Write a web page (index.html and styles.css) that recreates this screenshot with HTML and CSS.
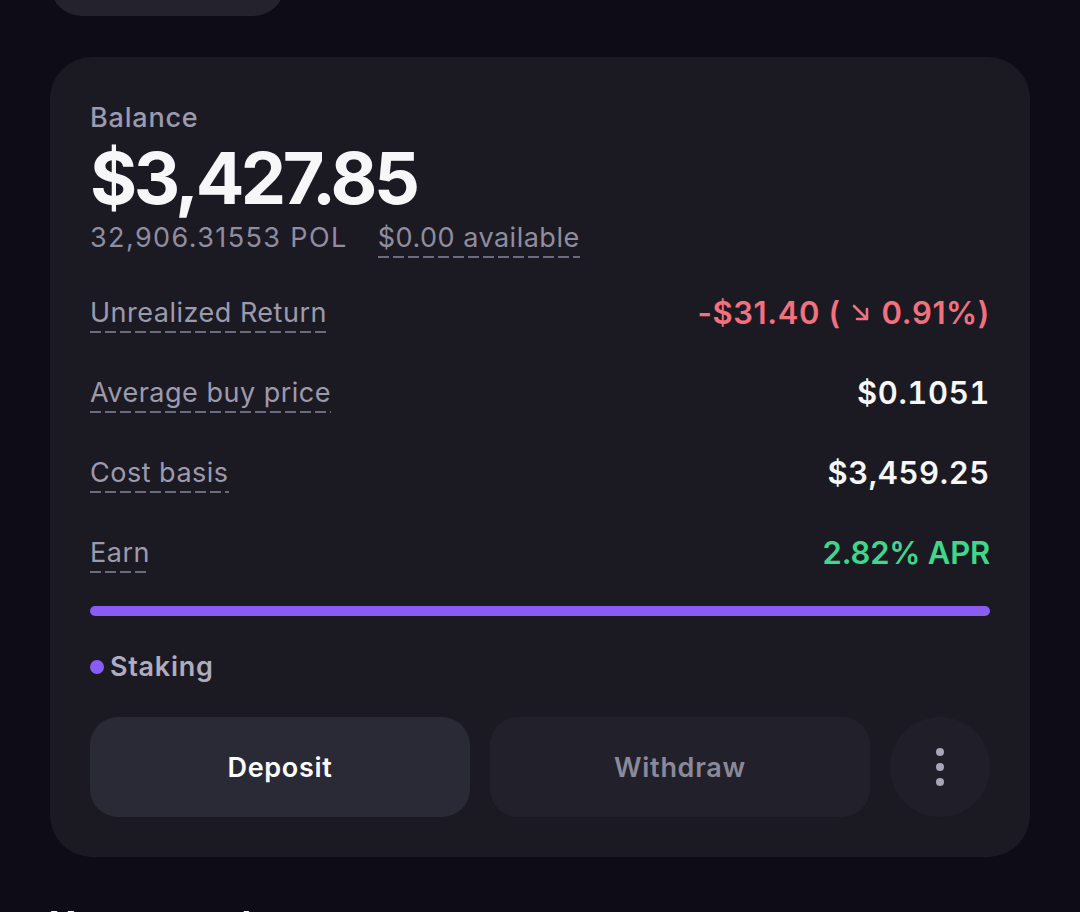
FILE: index.html
```html
<!DOCTYPE html>
<html>
<head>
<meta charset="utf-8">
<link rel="stylesheet" href="styles.css">
</head>
<body>
<div class="page">
  <div class="top-pill"></div>
  <section class="card">
    <div class="label-balance">Balance</div>
    <div class="amount">$3,427.85</div>
    <div class="subline">
      <span class="pol">32,906.31553 POL</span>
      <span class="dash avail">$0.00 available</span>
    </div>
    <div class="rows">
      <div class="row">
        <span class="dash">Unrealized Return</span>
        <span class="val neg">-$31.40 (<svg class="arrow" viewBox="0 0 24 24" width="24" height="24"><path d="M5 5 L18 18 M18 8 V18 H8" fill="none" stroke="currentColor" stroke-width="2.6" stroke-linecap="round" stroke-linejoin="round"/></svg>0.91%)</span>
      </div>
      <div class="row">
        <span class="dash">Average buy price</span>
        <span class="val">$0.1051</span>
      </div>
      <div class="row">
        <span class="dash">Cost basis</span>
        <span class="val">$3,459.25</span>
      </div>
      <div class="row">
        <span class="dash">Earn</span>
        <span class="val pos">2.82% APR</span>
      </div>
    </div>
    <div class="bar"></div>
    <div class="legend"><span class="dot"></span>Staking</div>
    <div class="actions">
      <button class="btn btn-primary">Deposit</button>
      <button class="btn btn-secondary">Withdraw</button>
      <button class="btn-more" aria-label="More"><span></span><span></span><span></span></button>
    </div>
  </section>
  <h2 class="next-title">Your rewards</h2>
</div>
</body>
</html>
```
FILE: styles.css
```css
* { box-sizing: border-box; }
html, body {
  margin: 0;
  padding: 0;
  background: #0e0c16;
}
body {
  width: 1080px;
  height: 912px;
  overflow: hidden;
  font-family: Inter, "Noto Sans", sans-serif;
  color: #ffffff;
}
.page {
  padding: 0 50px;
}
.top-pill {
  width: 235px;
  height: 80px;
  margin-top: -64px;
  background: #24232d;
  border-radius: 32px;
}
.card {
  margin-top: 41px;
  background: #1b1a23;
  border-radius: 42px;
  padding: 45px 40px 40px;
  display: flex;
  flex-direction: column;
}
.label-balance {
  font-size: 27px;
  line-height: 32px;
  font-weight: 500;
  letter-spacing: 0.8px;
  color: #9c9aad;
}
.amount {
  margin-top: 4px;
  font-size: 72px;
  line-height: 80px;
  font-weight: 700;
  letter-spacing: -3.5px;
  color: #f7f7fa;
}
.subline {
  margin-top: 4px;
  font-size: 27px;
  line-height: 32px;
  color: #8f8d9f;
  display: flex;
  gap: 30px;
}
.pol { letter-spacing: 1.4px; }
.avail { letter-spacing: 0.5px; }
.dash {
  display: inline-block;
  padding-bottom: 6px;
  margin-bottom: -6px;
  background-image: linear-gradient(to right, #6c6a7d 11px, transparent 11px);
  background-size: 15px 2px;
  background-repeat: repeat-x;
  background-position: 0 34px;
}
.rows {
  margin-top: 43px;
  display: flex;
  flex-direction: column;
  gap: 48px;
}
.row {
  display: flex;
  justify-content: space-between;
  align-items: flex-start;
  font-size: 27px;
  line-height: 32px;
  letter-spacing: 0.5px;
  color: #9c9aad;
}
.val {
  font-size: 31px;
  font-weight: 600;
  letter-spacing: 0.6px;
  font-variant-numeric: tabular-nums;
  color: #f7f7fa;
}
.val.neg {
  color: #f3707e;
  display: inline-flex;
  align-items: center;
  white-space: pre;
  letter-spacing: 0.6px;
  font-variant-numeric: normal;
}
.val.pos {
  color: #3ed88c;
  letter-spacing: -0.2px;
  font-variant-numeric: normal;
}
.arrow { margin: 0 9px 0 8px; }
.bar {
  margin-top: 37px;
  height: 10px;
  border-radius: 5px;
  background: #8a5cf6;
}
.legend {
  margin-top: 35px;
  display: flex;
  align-items: center;
  gap: 6px;
  font-size: 27px;
  line-height: 32px;
  font-weight: 600;
  letter-spacing: 0.7px;
  color: #aeacbf;
}
.dot {
  width: 14px;
  height: 14px;
  border-radius: 50%;
  background: #8a5cf6;
}
.actions {
  margin-top: 34px;
  display: flex;
  gap: 20px;
}
.btn {
  width: 380px;
  height: 100px;
  border: 0;
  border-radius: 28px;
  font-family: inherit;
  font-size: 27px;
  font-weight: 600;
  letter-spacing: 0.7px;
}
.btn-primary {
  background: #2a2a36;
  color: #ffffff;
}
.btn-secondary {
  background: #22212b;
  color: #8b8999;
}
.btn-more {
  width: 100px;
  height: 100px;
  border: 0;
  border-radius: 50%;
  background: #201f29;
  display: flex;
  flex-direction: column;
  align-items: center;
  justify-content: center;
  gap: 7px;
  padding: 0;
}
.btn-more span {
  width: 8px;
  height: 8px;
  border-radius: 50%;
  background: #a7a5b6;
}
.next-title {
  margin: 47px 0 0;
  font-size: 34px;
  line-height: 40px;
  font-weight: 700;
  color: #ffffff;
}
```
